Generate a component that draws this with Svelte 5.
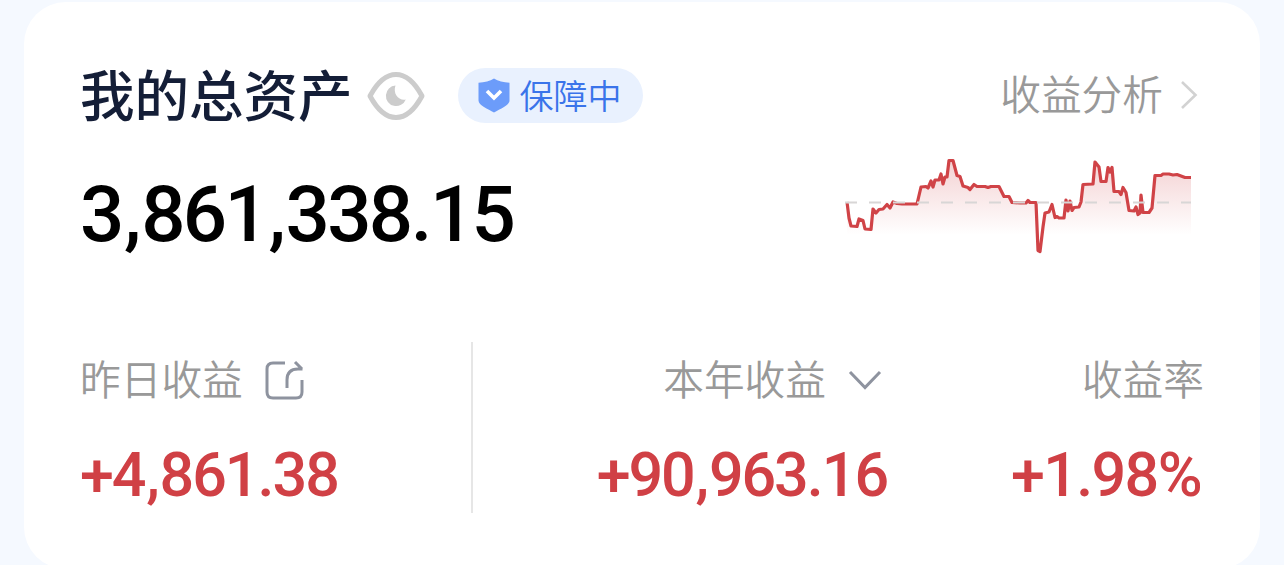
<script lang="ts">
	interface Stat {
		label: string;
		value: string;
		icon?: 'share' | 'chevron';
	}

	const total = '3,861,338.15';

	const stats: Stat[] = [
		{ label: '昨日收益', value: '+4,861.38', icon: 'share' },
		{ label: '本年收益', value: '+90,963.16', icon: 'chevron' },
		{ label: '收益率', value: '+1.98%' },
	];

	// trend samples, [x, y] inside the 360x115 chart box
	const trend: [number, number][] = [
		[7, 57], [9, 73], [11, 81], [17, 81.5], [19, 74], [23, 75.5], [25, 84], [31, 84.5],
		[33, 64], [36, 68], [39, 64.5], [43, 64], [47, 59.5], [50, 63], [53, 57], [57, 58.5],
		[62, 59], [77, 59], [81, 42], [86, 41.5], [88, 43], [91, 36], [93, 42], [95, 35],
		[99, 35], [101, 29], [103, 39], [105, 32], [107, 32], [109, 15.5], [113, 15.5],
		[117, 30.5], [120, 31.5], [123, 41], [128, 42.5], [130, 44.5], [134, 39.5], [137, 41.5],
		[145, 41.5], [148, 42.5], [151, 41.5], [159, 41.5], [164, 51.5], [169, 51.5],
		[172, 57.5], [180, 58], [186, 58], [188, 55.5], [190, 57.5], [196, 57.5],
		[198, 105.5], [200, 106.5], [203, 82], [205, 68], [209, 67], [212, 59.5],
		[215, 72.5], [217, 71.5], [219, 73], [224, 73], [226, 55], [228, 66], [230, 56],
		[232, 65.5], [234, 62.5], [239, 62], [241, 57], [243, 39.5], [253, 39], [255, 17],
		[259, 22], [261, 36.5], [266, 36.5], [268, 22.5], [270, 27], [272, 22.5], [274, 46.5],
		[279, 46.5], [281, 49.5], [283, 42.5], [286, 47.5], [289, 65.5], [294, 66],
		[296, 62], [298, 69.5], [300, 68], [301, 50], [303, 67.5], [309, 67.5], [312, 63],
		[315, 30.5], [321, 30.5], [323, 29], [329, 29], [333, 30], [337, 29.5], [341, 31],
		[345, 32.5], [351, 32.5],
	];

	const line = trend.map(([x, y]) => `${x},${y}`).join(' ');
	const area = `7,90 ${line} 351,90`;

	// split "1,234.5" so that separators get their own fixed width
	function pieces(value: string): string[] {
		return value.split(/([,.])/);
	}
</script>

{#snippet amount(value: string)}
	{#each pieces(value) as piece}{#if piece === ',' || piece === '.'}<span class="mark">{piece}</span>{:else}{piece}{/if}{/each}
{/snippet}

<section class="card">
	<header class="head">
		<h1 class="title">我的总资产</h1>
		<svg class="eye" viewBox="0 0 58 50">
			<path d="M3 25C10 12 18 3.500 29 3.500S48 12 55 25C48 38 40 46.500 29 46.500S10 38 3 25Z" fill="none" stroke="#ccc" stroke-width="5" stroke-linejoin="round" />
			<path d="M28.500 14.500A10.300 10.300 0 1 0 38.800 28.500C32 30 25.500 23 28.500 14.500Z" fill="#ccc" />
		</svg>
		<span class="badge">
			<svg class="shield" viewBox="0 0 32 35">
				<path d="M16 .5C20 3 25.500 4.500 31.500 4.800V22.500C31.500 27.500 22 31 16 34.500C10 31 .5 27.500 .5 22.500V4.800C6.500 4.500 12 3 16 .5Z" fill="#6c9cfa" />
				<path d="M9 13L16 20L23 13" fill="none" stroke="#fff" stroke-width="3.600" />
			</svg>
			<span class="text">保障中</span>
		</span>
		<span class="analysis">
			<span class="text">收益分析</span>
			<svg class="arrow" viewBox="0 0 18 30">
				<path d="M2 2L15.500 15L2 28" fill="none" stroke="#d2d2d2" stroke-width="2.600" />
			</svg>
		</span>
	</header>

	<div class="overview">
		<div class="total">{@render amount(total)}</div>
		<svg class="chart" viewBox="0 0 360 115">
			<defs>
				<linearGradient id="fade" gradientUnits="userSpaceOnUse" x1="0" y1="15" x2="0" y2="90">
					<stop offset="0" stop-color="#d04045" stop-opacity="0.24" />
					<stop offset="1" stop-color="#d04045" stop-opacity="0" />
				</linearGradient>
			</defs>
			<polygon points={area} fill="url(#fade)" />
			<polyline points={line} fill="none" stroke="#d04347" stroke-width="3.200" stroke-linejoin="round" />
			<path d="M5 57.500H351" stroke="#d8d6d6" stroke-width="2" stroke-dasharray="12 12" />
		</svg>
	</div>

	<div class="stats">
		{#each stats as stat (stat.label)}
			<div class="stat">
				<div class="label">
					<span class="text">{stat.label}</span>
					{#if stat.icon === 'share'}
						<svg class="share" viewBox="0 0 40 40">
							<path d="M20 3H8Q2 3 2 9V32Q2 38 8 38H31Q37 38 37 32V20" />
							<path d="M22 28V20Q22 9 33 9H37.500M30 2L37 9" />
						</svg>
					{:else if stat.icon === 'chevron'}
						<svg class="chevron" viewBox="0 0 34 22">
							<path d="M2 3L17 18.500L32 3" />
						</svg>
					{/if}
				</div>
				<div class="value">{@render amount(stat.value)}</div>
			</div>
		{/each}
	</div>
</section>

<style>
	:global(body) {
		background: #f5f9ff;
		overflow: hidden;
	}

	.card {
		box-sizing: border-box;
		height: 567px;
		margin: 2px 24px 0;
		padding: 63px 56px 0;
		background: #fff;
		border-radius: 42px;
		font-family: 'Noto Sans CJK SC', sans-serif;
	}

	svg {
		display: block;
		flex-shrink: 0;
	}

	.text {
		padding-bottom: 5px;
	}

	.head {
		display: flex;
		align-items: center;
		height: 60px;
	}

	.title {
		margin: 0;
		padding-bottom: 4px;
		font-size: 54.5px;
		font-weight: 500;
		line-height: 60px;
		color: #141e37;
	}

	.eye {
		width: 58px;
		height: 50px;
		margin: 1px 0 0 14px;
	}

	.badge {
		display: flex;
		align-items: center;
		box-sizing: border-box;
		width: 185px;
		height: 55px;
		margin-left: 33px;
		padding-left: 20px;
		gap: 10px;
		border-radius: 28px;
		background: #e9f1fe;
		color: #3a74ea;
		font-size: 34px;
		font-weight: 350;
		white-space: nowrap;
	}

	.badge .text {
		padding-bottom: 1px;
	}

	.shield {
		width: 32px;
		height: 35px;
	}

	.analysis {
		display: flex;
		align-items: center;
		gap: 17px;
		margin-left: auto;
		margin-right: 6px;
		font-size: 40.7px;
		font-weight: 350;
		color: #999;
	}

	.arrow {
		width: 18px;
		height: 30px;
	}

	.overview {
		display: flex;
		justify-content: space-between;
		height: 115px;
		margin-top: 20px;
	}

	.total {
		font-family: Roboto, sans-serif;
		font-size: 78px;
		font-weight: 550;
		line-height: 139px;
		letter-spacing: -2.7px;
		color: #000;
	}

	.mark {
		display: inline-block;
		width: 0.25em;
		text-align: center;
	}

	.chart {
		width: 360px;
		height: 115px;
		margin-right: 4px;
	}

	.stats {
		display: grid;
		grid-template-columns: 393px 414px 317px;
		height: 171px;
		margin-top: 82px;
	}

	.stat {
		display: flex;
		flex-direction: column;
		align-items: flex-end;
	}

	.stat:first-child {
		align-items: flex-start;
		border-right: 2px solid #e6e6e6;
	}

	.label {
		display: flex;
		align-items: center;
		height: 76px;
		font-size: 40.7px;
		font-weight: 350;
		color: #999;
	}

	.share,
	.chevron {
		fill: none;
		stroke: #8e939f;
		stroke-width: 3;
	}

	.share {
		width: 40px;
		height: 40px;
		margin-left: 22px;
	}

	.chevron {
		width: 34px;
		height: 22px;
		margin: 0 5px 0 22px;
	}

	.value {
		margin-top: 20px;
		font-family: Roboto, sans-serif;
		font-size: 61px;
		font-weight: 550;
		line-height: 74px;
		letter-spacing: -2.1px;
		color: #d04045;
	}

	.stat:last-child .value {
		margin-right: 3px;
		letter-spacing: -1.6px;
	}
</style>
